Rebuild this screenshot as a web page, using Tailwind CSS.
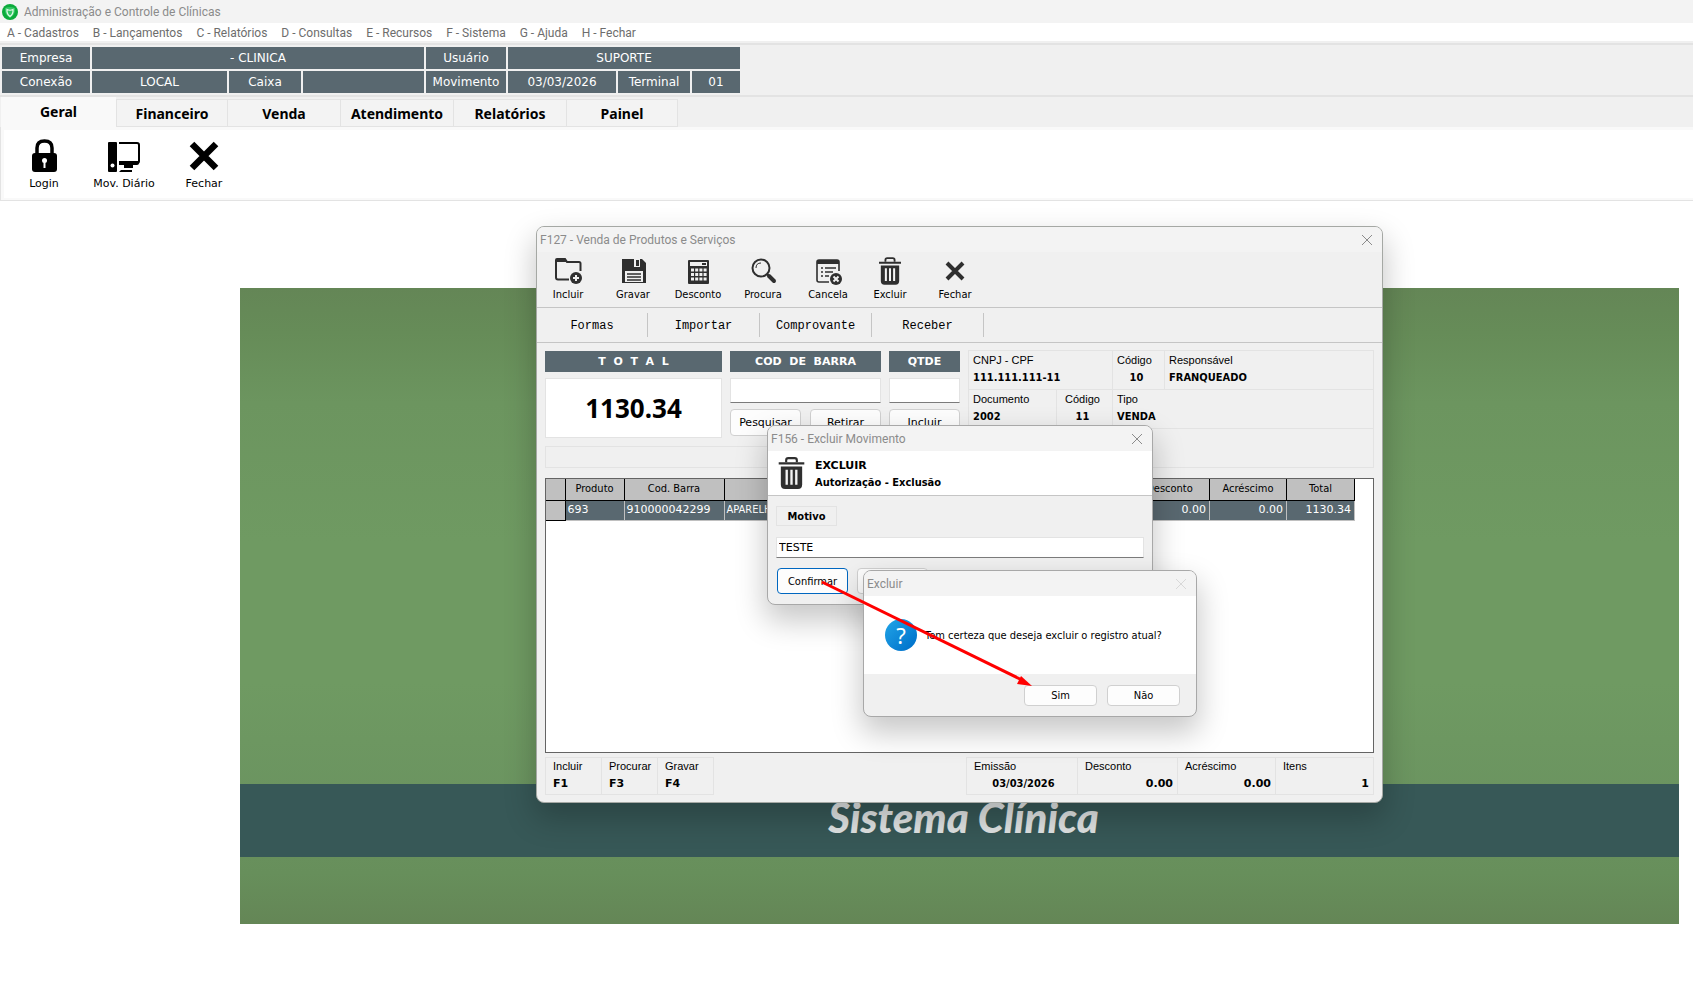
<!doctype html>
<html lang="pt-BR">
  <head>
    <meta charset="utf-8" />
    <title>Administração e Controle de Clínicas</title>
    <meta name="viewport" content="width=device-width, initial-scale=1" />
    <script src="https://cdn.jsdelivr.net/npm/@tailwindcss/browser@4"></script>
  </head>
  <body class="relative min-h-screen overflow-x-hidden bg-white font-['DejaVu_Sans',sans-serif] text-[11px] leading-4 text-black">
    <!-- Shared icon -->
    <svg class="hidden">
      <symbol id="trash" viewBox="0 0 24 30">
        <path d="M7 5V3q0-2 2-2h6q2 0 2 2v2" fill="none" stroke="#2f2f2f" stroke-width="2" />
        <path d="M0 5h24v2H0zM2 9h20v17q0 4-4 4H6q-4 0-4-4z" fill="#2f2f2f" />
        <path d="M7.500 12v14M12 12v14M16.500 12v14" stroke="#f4f4f4" stroke-width="2.200" />
      </symbol>
    </svg>

    <header>
      <!-- Title bar -->
      <div class="flex h-[23px] items-center gap-[6px] bg-[#f3f3f3] px-[2px] font-['Roboto',sans-serif] text-[12px] text-[#8b8b8b]">
        <svg class="size-4" viewBox="0 0 16 16">
          <circle cx="8" cy="8" r="8" fill="#0cab3c" />
          <path d="M3 4q5-2 10 0q1 6-5 10q-6-4-5-10z" fill="#35c765" />
          <path d="M5 5.500q3 1.500 6 0q.5 4.500-3 7q-3.500-2.500-3-7z" fill="none" stroke="#e2fae9" stroke-width="1.200" />
        </svg>
        <h1>Administração e Controle de Clínicas</h1>
      </div>

      <!-- Menu -->
      <nav class="flex h-[18px] items-center gap-[14px] bg-white px-[7px] pb-px pt-[2px] font-['Roboto',sans-serif] text-[12px] text-[#6d6d6d]">
        <a href="#">A - Cadastros</a>
        <a href="#">B - Lançamentos</a>
        <a href="#">C - Relatórios</a>
        <a href="#">D - Consultas</a>
        <a href="#">E - Recursos</a>
        <a href="#">F - Sistema</a>
        <a href="#">G - Ajuda</a>
        <a href="#">H - Fechar</a>
      </nav>

      <!-- Session info -->
      <div class="border-b-2 border-[#e3e3e3] bg-[#f0f0f0] pb-[2px] pt-[2px] text-[12px] text-white">
        <div class="mb-[2px] h-[2px] bg-[#e3e3e3]"></div>
        <div class="grid w-[742px] grid-cols-[88px_135px_72px_121px_80px_108px_72px_48px] gap-[2px] px-[2px] text-center leading-[22px]">
          <div class="bg-[#596870]">Empresa</div>
          <div class="col-span-3 bg-[#596870]">- CLINICA</div>
          <div class="bg-[#596870]">Usuário</div>
          <div class="col-span-3 bg-[#596870]">SUPORTE</div>
          <div class="bg-[#596870]">Conexão</div>
          <div class="bg-[#596870]">LOCAL</div>
          <div class="bg-[#596870]">Caixa</div>
          <div class="bg-[#596870]"></div>
          <div class="bg-[#596870]">Movimento</div>
          <div class="bg-[#596870]">03/03/2026</div>
          <div class="bg-[#596870]">Terminal</div>
          <div class="bg-[#596870]">01</div>
        </div>
      </div>

      <!-- Tabs -->
      <div class="flex h-[30px] items-end bg-[#f0f0f0] pl-px font-['Noto_Sans',sans-serif] text-[14px] font-bold">
        <button class="h-[30px] w-[115px] bg-[#f9f9f9]">Geral</button>
        <button class="h-7 w-28 border border-[#e3e3e3] bg-[#f3f3f3] pt-[2px]">Financeiro</button>
        <button class="h-7 w-[113px] border border-l-0 border-[#e3e3e3] bg-[#f3f3f3] pt-[2px]">Venda</button>
        <button class="h-7 w-[113px] border border-l-0 border-[#e3e3e3] bg-[#f3f3f3] pt-[2px]">Atendimento</button>
        <button class="h-7 w-[113px] border border-l-0 border-[#e3e3e3] bg-[#f3f3f3] pt-[2px]">Relatórios</button>
        <button class="h-7 w-[111px] border border-l-0 border-[#e3e3e3] bg-[#f3f3f3] pt-[2px]">Painel</button>
      </div>
      <div class="border-b border-l border-[#e3e3e3] bg-[#f9f9f9] pb-[2px] pl-[3px] pt-[3px]">
        <div class="flex h-[68px] bg-white">
          <button class="flex w-20 flex-col items-center gap-[2px] pt-2">
            <svg class="size-9" viewBox="0 0 36 36">
              <path d="M11 16v-6q0-7 7.500-7t7.500 7v6" fill="none" stroke="#000" stroke-width="3.500" />
              <rect x="6" y="15" width="25" height="19" rx="3" />
              <circle cx="18.500" cy="22.500" r="2.500" fill="#fff" />
              <path d="M17.500 23h2v7h-2z" fill="#fff" />
            </svg>
            Login
          </button>
          <button class="flex w-20 flex-col items-center gap-[2px] whitespace-nowrap pt-2">
            <svg class="size-9" viewBox="0 0 36 36">
              <rect x="2" y="4" width="9" height="30" rx="1" />
              <circle cx="6.500" cy="27.500" r="2" fill="#fff" />
              <path d="M13 5h18q2 0 2 2v16q0 2-2 2H13" fill="none" stroke="#000" stroke-width="2" />
              <path d="M13 23h20v2q0 2-2 2H13zM18 27h9v3h-9zM15 32h11v2H13z" />
            </svg>
            Mov. Diário
          </button>
          <button class="flex w-20 flex-col items-center gap-[2px] pt-2">
            <svg class="size-9" viewBox="0 0 36 36">
              <path d="M6 6l24 24M30 6l-24 24" stroke="#000" stroke-width="6.500" />
            </svg>
            Fechar
          </button>
        </div>
      </div>
    </header>

    <!-- Wallpaper -->
    <main class="ml-60 mr-[14px] mt-[87px] flex h-[636px] flex-col justify-end bg-[linear-gradient(#648656,#668c58_7%,#6c955f_18%,#6f9a62_40%,#6f9a62_62%,#6b9460_80%,#678f5b_92%,#648656)] pb-[67px]">
      <div class="h-[73px] bg-[#375857] pl-2 text-center font-['Lato',sans-serif] text-[42px] font-black italic leading-[66px] text-[#e0e3e3]">
        Sistema Clínica
      </div>
    </main>

    <!-- F127 window -->
    <section class="absolute left-[536px] top-[226px] flex h-[577px] w-[847px] flex-col overflow-hidden rounded-lg border border-[#a5a8a4] bg-[#f0f0f0] shadow-[0_14px_30px_2px_rgba(0,0,0,0.22)]">
      <div class="flex h-[25px] items-center justify-between bg-[#f3f3f3] pl-[3px] pr-[9px] font-['Roboto',sans-serif] text-[12px] text-[#8b8b8b]">
        <h2>F127 - Venda de Produtos e Serviços</h2>
        <button aria-label="Fechar janela">
          <svg class="size-3" viewBox="0 0 12 12"><path d="M1 1l10 10M11 1l-10 10" stroke="#8b8b8b" /></svg>
        </button>
      </div>

      <div class="flex h-14 gap-[5px] border-b border-[#c5c5c5] pl-px font-['DejaVu_Sans_Condensed','DejaVu_Sans',sans-serif]">
        <button class="flex w-[60px] flex-col items-center gap-[2px] pt-[5px]">
          <svg class="size-7" viewBox="0 0 28 28">
            <path d="M15 22.500H4q-2 0-2-2V3q0-1 1-1h8l2 3h12q1.500 0 1.500 1.500V14" fill="none" stroke="#2f2f2f" stroke-width="2" />
            <path d="M2 2h9l2 3H2z" fill="#2f2f2f" />
            <circle cx="22" cy="21" r="6" fill="#2f2f2f" />
            <path d="M19 21h6M22 18v6" stroke="#f0f0f0" stroke-width="2" />
          </svg>
          Incluir
        </button>
        <button class="flex w-[60px] flex-col items-center gap-[2px] pt-[5px]">
          <svg class="size-7" viewBox="0 0 28 28">
            <path d="M3 2h20l4 4v20H3z" fill="#2f2f2f" />
            <path d="M8 2h13v8H8zM6 14h18v11H6z" fill="#f0f0f0" />
            <path d="M8 2h7v8H8zM17 3h3v6h-3z" fill="#2f2f2f" />
            <path d="M8 17h14M8 20h14M8 23h14" stroke="#2f2f2f" stroke-width="1.400" />
          </svg>
          Gravar
        </button>
        <button class="flex w-[60px] flex-col items-center gap-[2px] pt-[5px]">
          <svg class="size-7" viewBox="0 0 28 28">
            <rect x="4" y="3" width="21" height="24" rx="1" fill="#2f2f2f" />
            <path d="M6 5h17v4H6z" fill="#f0f0f0" />
            <path d="M18 6h4v2h-4z" fill="#2f2f2f" />
            <path d="M7 13h16M7 17.500h16M7 22h16" stroke="#f0f0f0" stroke-width="3" stroke-dasharray="3 1.200" />
          </svg>
          Desconto
        </button>
        <button class="flex w-[60px] flex-col items-center gap-[2px] pt-[5px]">
          <svg class="size-7" viewBox="0 0 28 28">
            <circle cx="12" cy="11" r="8.500" fill="none" stroke="#2f2f2f" stroke-width="2" />
            <path d="M7 11q0-5 5-5" fill="none" stroke="#2f2f2f" />
            <path d="M18 17l2 2" stroke="#2f2f2f" stroke-width="2" />
            <path d="M20 19l5 5" stroke="#2f2f2f" stroke-width="4" stroke-linecap="round" />
          </svg>
          Procura
        </button>
        <button class="flex w-[60px] flex-col items-center gap-[2px] pt-[5px]">
          <svg class="size-7" viewBox="0 0 28 28">
            <path d="M15 25H5q-2 0-2-2V5q0-2 2-2h18q2 0 2 2v9" fill="none" stroke="#2f2f2f" stroke-width="1.600" />
            <path d="M3 3h22v4H3z" fill="#2f2f2f" />
            <path d="M7 11h2M11 11h11M7 15h2M11 15h8M7 19h2M11 19h4" stroke="#2f2f2f" stroke-width="1.600" />
            <circle cx="22" cy="22" r="6" fill="#2f2f2f" />
            <path d="M19.500 19.500l5 5M24.500 19.500l-5 5" stroke="#f0f0f0" stroke-width="2" />
          </svg>
          Cancela
        </button>
        <button class="flex w-[54px] flex-col items-center gap-[2px] pt-[5px]">
          <svg class="h-7 w-[22px]"><use href="#trash" /></svg>
          Excluir
        </button>
        <button class="flex w-[66px] flex-col items-center gap-[2px] pt-[5px]">
          <svg class="size-7" viewBox="0 0 28 28">
            <path d="M6 6l16 16M22 6l-16 16" stroke="#2f2f2f" stroke-width="4" />
          </svg>
          Fechar
        </button>
      </div>

      <div class="flex h-[35px] items-center border-b border-[#c5c5c5] font-['Liberation_Mono',monospace] text-[12px]">
        <button class="h-6 w-[111px] border-r border-[#c5c5c5] pt-[2px]">Formas</button>
        <button class="h-6 w-28 border-r border-[#c5c5c5] pt-[2px]">Importar</button>
        <button class="h-6 w-28 border-r border-[#c5c5c5] pt-[2px]">Comprovante</button>
        <button class="h-6 w-28 border-r border-[#c5c5c5] pt-[2px]">Receber</button>
      </div>

      <div class="flex flex-1 flex-col px-2 pb-[7px] pt-[7px]">
        <div class="flex gap-2">
          <div class="grid grid-cols-[177px_151px_71px] content-start gap-x-2 pt-px">
            <div class="flex flex-col gap-[6px]">
              <h3 class="bg-[#596870] text-center font-bold leading-[21px] text-white">T &nbsp;O &nbsp;T &nbsp;A &nbsp;L</h3>
              <output class="border border-[#e3e3e3] bg-white text-center font-['Noto_Sans',sans-serif] text-[26px] font-bold leading-[58px]">1130.34</output>
            </div>
            <div class="flex flex-col gap-[6px]">
              <label for="barcode" class="bg-[#596870] text-center font-bold leading-[21px] text-white">COD &nbsp;DE &nbsp;BARRA</label>
              <input id="barcode" type="text" class="h-[25px] border border-[#e3e3e3] border-b-[#7b7b7b] bg-white px-1" />
              <div class="flex justify-between">
                <button class="h-[27px] w-[71px] rounded border border-[#d0d0d0] bg-[#fdfdfd] pt-px">Pesquisar</button>
                <button class="h-[27px] w-[71px] rounded border border-[#d0d0d0] bg-[#fdfdfd] pt-px">Retirar</button>
              </div>
            </div>
            <div class="flex flex-col gap-[6px]">
              <label for="qty" class="bg-[#596870] text-center font-bold leading-[21px] text-white">QTDE</label>
              <input id="qty" type="text" class="h-[25px] border border-[#e3e3e3] border-b-[#7b7b7b] bg-white px-1" />
              <button class="h-[27px] rounded border border-[#d0d0d0] bg-[#fdfdfd] pt-px">Incluir</button>
            </div>
            <div class="col-span-3 mt-2 h-[22px] border border-[#e3e3e3]"></div>
          </div>

          <dl class="grid flex-1 grid-cols-[88px_56px_52px_1fr] grid-rows-[39px_39px_39px] border-l border-t border-[#e3e3e3] font-['Liberation_Sans',sans-serif] leading-[17px]">
            <div class="col-span-2 border-b border-r border-[#e3e3e3] px-1 pt-px">
              <dt>CNPJ - CPF</dt>
              <dd class="font-['DejaVu_Sans_Condensed','DejaVu_Sans',sans-serif] font-bold">111.111.111-11</dd>
            </div>
            <div class="border-b border-r border-[#e3e3e3] px-1 pt-px">
              <dt>Código</dt>
              <dd class="pr-1 text-center font-['DejaVu_Sans_Condensed','DejaVu_Sans',sans-serif] font-bold">10</dd>
            </div>
            <div class="border-b border-r border-[#e3e3e3] px-1 pt-px">
              <dt>Responsável</dt>
              <dd class="font-['DejaVu_Sans_Condensed','DejaVu_Sans',sans-serif] font-bold">FRANQUEADO</dd>
            </div>
            <div class="border-b border-r border-[#e3e3e3] px-1 pt-px">
              <dt>Documento</dt>
              <dd class="font-['DejaVu_Sans_Condensed','DejaVu_Sans',sans-serif] font-bold">2002</dd>
            </div>
            <div class="border-b border-r border-[#e3e3e3] pl-1 pr-2 pt-px text-center">
              <dt>Código</dt>
              <dd class="font-['DejaVu_Sans_Condensed','DejaVu_Sans',sans-serif] font-bold">11</dd>
            </div>
            <div class="col-span-2 border-b border-r border-[#e3e3e3] px-1 pt-px">
              <dt>Tipo</dt>
              <dd class="font-['DejaVu_Sans_Condensed','DejaVu_Sans',sans-serif] font-bold">VENDA</dd>
            </div>
            <div class="col-span-4 border-b border-r border-[#e3e3e3]"></div>
          </dl>
        </div>

        <div class="mt-[10px] flex-1 border border-[#646464] bg-white">
          <table class="w-[809px] table-fixed border-collapse font-['DejaVu_Sans_Condensed','DejaVu_Sans',sans-serif]">
            <thead>
              <tr class="h-[21px] bg-[#c0c0c0]">
                <th class="w-[19px] border-b border-r border-black"></th>
                <th class="w-[59px] border-b border-r border-black font-normal">Produto</th>
                <th class="w-[100px] border-b border-r border-black font-normal">Cod. Barra</th>
                <th class="border-b border-r border-black font-normal"></th>
                <th class="w-20 border-b border-r border-black font-normal">Desconto</th>
                <th class="w-[77px] border-b border-r border-black font-normal">Acréscimo</th>
                <th class="w-[68px] border-b border-r border-black font-normal">Total</th>
              </tr>
            </thead>
            <tbody class="font-['DejaVu_Sans',sans-serif]">
              <tr class="h-5 bg-[#596870] text-white">
                <td class="border-b border-r border-black bg-[#c0c0c0]"></td>
                <td class="border-b border-r border-[#c0c0c0] px-[2px]">693</td>
                <td class="border-b border-r border-[#c0c0c0] px-[2px]">910000042299</td>
                <td class="border-b border-r border-[#c0c0c0] px-[2px] font-['DejaVu_Sans_Condensed','DejaVu_Sans',sans-serif]">APARELHO</td>
                <td class="border-b border-r border-[#c0c0c0] px-[3px] text-right">0.00</td>
                <td class="border-b border-r border-[#c0c0c0] px-[3px] text-right">0.00</td>
                <td class="border-b border-r border-[#c0c0c0] px-[3px] text-right">1130.34</td>
              </tr>
            </tbody>
          </table>
        </div>

        <div class="mt-1 flex h-[38px] justify-between font-['Liberation_Sans',sans-serif] leading-[17px]">
          <dl class="flex border-l border-[#e3e3e3]">
            <div class="w-14 border-y border-r border-[#e3e3e3] pl-[7px]">
              <dt>Incluir</dt>
              <dd class="font-['DejaVu_Sans',sans-serif] font-bold">F1</dd>
            </div>
            <div class="w-14 border-y border-r border-[#e3e3e3] pl-[7px]">
              <dt>Procurar</dt>
              <dd class="font-['DejaVu_Sans',sans-serif] font-bold">F3</dd>
            </div>
            <div class="w-14 border-y border-r border-[#e3e3e3] pl-[7px]">
              <dt>Gravar</dt>
              <dd class="font-['DejaVu_Sans',sans-serif] font-bold">F4</dd>
            </div>
          </dl>
          <dl class="flex border-l border-[#e3e3e3]">
            <div class="w-[111px] border-y border-r border-[#e3e3e3] pl-[7px] pr-1">
              <dt>Emissão</dt>
              <dd class="text-center font-['DejaVu_Sans_Condensed','DejaVu_Sans',sans-serif] font-bold">03/03/2026</dd>
            </div>
            <div class="w-[100px] border-y border-r border-[#e3e3e3] pl-[7px] pr-1">
              <dt>Desconto</dt>
              <dd class="text-right font-['DejaVu_Sans',sans-serif] font-bold">0.00</dd>
            </div>
            <div class="w-[98px] border-y border-r border-[#e3e3e3] pl-[7px] pr-1">
              <dt>Acréscimo</dt>
              <dd class="text-right font-['DejaVu_Sans',sans-serif] font-bold">0.00</dd>
            </div>
            <div class="w-[98px] border-y border-r border-[#e3e3e3] pl-[7px] pr-1">
              <dt>Itens</dt>
              <dd class="text-right font-['DejaVu_Sans',sans-serif] font-bold">1</dd>
            </div>
          </dl>
        </div>
      </div>
    </section>

    <!-- F156 window -->
    <section class="absolute left-[767px] top-[425px] h-[180px] w-[386px] overflow-hidden rounded-lg border border-[#a8a8a8] bg-[#f0f0f0] shadow-[0_14px_30px_2px_rgba(0,0,0,0.22)]">
      <div class="flex h-[25px] items-center justify-between bg-[#f3f3f3] pl-[3px] pr-[9px] font-['Roboto',sans-serif] text-[12px] text-[#8b8b8b]">
        <h2>F156 - Excluir Movimento</h2>
        <button aria-label="Fechar janela">
          <svg class="size-3" viewBox="0 0 12 12"><path d="M1 1l10 10M11 1l-10 10" stroke="#8b8b8b" /></svg>
        </button>
      </div>
      <div class="flex h-[45px] items-center gap-[10px] border-b border-[#c5c5c5] bg-white pl-[10px] font-bold">
        <svg class="h-8 w-[27px]"><use href="#trash" /></svg>
        <div class="pt-[2px] leading-[17px]">
          <h3>EXCLUIR</h3>
          <p class="font-['DejaVu_Sans_Condensed','DejaVu_Sans',sans-serif]">Autorização - Exclusão</p>
        </div>
      </div>
      <div class="px-2 pt-[10px]">
        <label for="reason" class="block w-[61px] border border-[#e3e3e3] pt-px text-center font-['DejaVu_Sans_Condensed','DejaVu_Sans',sans-serif] font-bold leading-[17px]">Motivo</label>
        <input id="reason" type="text" value="TESTE" class="mt-[11px] h-[21px] w-full border border-[#e3e3e3] border-b-[#7b7b7b] bg-white px-[2px]" />
        <div class="mt-[10px] flex gap-[9px] px-px font-['DejaVu_Sans_Condensed','DejaVu_Sans',sans-serif]">
          <button class="h-[26px] w-[71px] rounded border border-[#0067c0] bg-[#fdfdfd] pt-px">Confirmar</button>
          <button class="h-[26px] w-[71px] rounded border border-[#d0d0d0] bg-[#fdfdfd]" aria-label="Cancelar"></button>
        </div>
      </div>
    </section>

    <!-- Confirmation dialog -->
    <section role="dialog" class="absolute left-[863px] top-[570px] w-[334px] overflow-hidden rounded-lg border border-[#a8a8a8] bg-[#f0f0f0] font-['DejaVu_Sans_Condensed','DejaVu_Sans',sans-serif] shadow-[0_14px_30px_2px_rgba(0,0,0,0.22)]">
      <div class="flex h-[25px] items-center justify-between bg-[#f3f3f3] pl-[3px] pr-[9px] font-['Roboto',sans-serif] text-[12px] text-[#8b8b8b]">
        <h2>Excluir</h2>
        <button aria-label="Fechar janela" disabled>
          <svg class="size-3" viewBox="0 0 12 12"><path d="M1 1l10 10M11 1l-10 10" stroke="#d8d8d8" /></svg>
        </button>
      </div>
      <div class="flex h-[78px] items-center gap-2 bg-white pl-[21px]">
        <div class="size-8 rounded-full bg-linear-to-br from-[#22a6e8] to-[#006cc8] text-center font-['Noto_Sans',sans-serif] text-[22px] leading-8 text-white">?</div>
        <p class="pt-[2px]">Tem certeza que deseja excluir o registro atual?</p>
      </div>
      <div class="flex justify-end gap-[10px] px-4 pb-[10px] pt-[11px]">
        <button class="h-[21px] w-[73px] rounded border border-[#d0d0d0] bg-[#fdfdfd] pt-px">Sim</button>
        <button class="h-[21px] w-[73px] rounded border border-[#d0d0d0] bg-[#fdfdfd] pt-px">Não</button>
      </div>
    </section>

    <!-- Arrow from Confirmar to Sim -->
    <svg class="pointer-events-none absolute left-[820px] top-[580px] h-[110px] w-[220px]" viewBox="0 0 220 110">
      <path d="M2 2L202 100" stroke="#f00" stroke-width="3" />
      <path d="M212 106l-15-2l4-8z" fill="#f00" />
    </svg>
  </body>
</html>
